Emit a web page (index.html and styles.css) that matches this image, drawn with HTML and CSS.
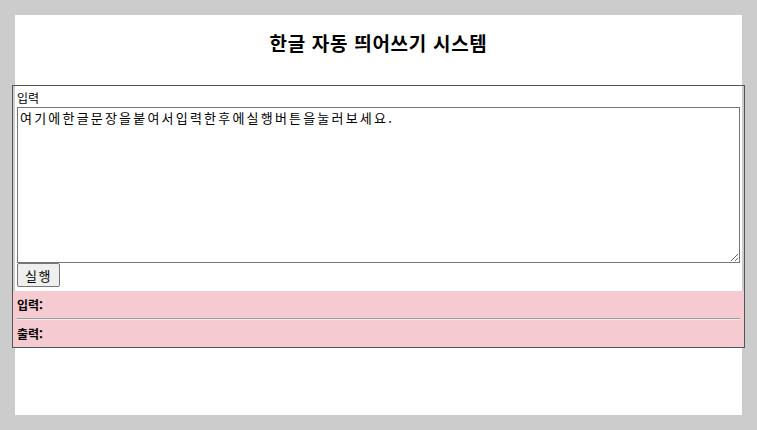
FILE: index.html
```html
<!DOCTYPE html>
<html lang="ko">
<head>
<meta charset="utf-8">
<title>한글 자동 띄어쓰기 시스템</title>
<link rel="stylesheet" href="styles.css">
</head>
<body>
<div class="page">
  <h1 class="title">한글 자동 띄어쓰기 시스템</h1>
  <div class="box">
    <label class="label" for="src">입력</label>
    <textarea id="src" class="input">여기에한글문장을붙여서입력한후에실행버튼을눌러보세요.</textarea>
    <button class="run" type="button">실행</button>
    <div class="result">
      <div class="row"><b>입력:</b></div>
      <hr class="sep">
      <div class="row"><b>출력:</b></div>
    </div>
  </div>
</div>
</body>
</html>
```
FILE: styles.css
```css
html, body {
  margin: 0;
  padding: 0;
}
body {
  background: #cccccc;
  padding: 15px;
  font-family: "Noto Sans CJK KR", "Noto Sans", sans-serif;
  color: #000;
}
.page {
  background: #ffffff;
  height: 400px;
  box-sizing: border-box;
  padding-top: 13px;
}
.title {
  margin: 0;
  text-align: center;
  font-size: 19px;
  line-height: 30px;
  font-weight: 700;
  letter-spacing: 0.7px;
}
.box {
  margin: 27px -3px 0;
  border: 1px solid #555555;
  padding: 3px 0 0;
}
.label {
  display: block;
  font-size: 12px;
  line-height: 17px;
  padding-left: 4px;
}
.input {
  display: block;
  box-sizing: border-box;
  width: 723px;
  height: 156px;
  margin: 1px 0 0 4px;
  padding: 2px 2px;
  border: 1px solid #767676;
  font-family: "Noto Sans CJK KR", monospace;
  font-size: 13px;
  line-height: 16px;
  letter-spacing: 2.2px;
  resize: both;
}
.run {
  display: block;
  margin: 0 0 4px 4px;
  width: 43px;
  height: 24px;
  padding: 0;
  font-family: "Noto Sans CJK KR", sans-serif;
  font-size: 13px;
  letter-spacing: 1.5px;
  background: #efefef;
  border: 1px solid #767676;
  border-radius: 2px;
}
.result {
  background: #f6cad1;
  padding: 0 4px;
}
.row {
  height: 27px;
  line-height: 27px;
  font-size: 12px;
}
.sep {
  margin: 0;
  border: 0;
  border-top: 1px solid #9a9a9a;
  border-bottom: 1px solid #eeeeee;
  height: 0;
}
```
